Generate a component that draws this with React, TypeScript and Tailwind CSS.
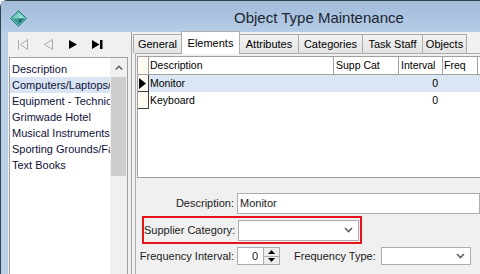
import React from 'react'

const listItems = [
  'Computers/Laptops/Printers',
  'Equipment - Technical',
  'Grimwade Hotel',
  'Musical Instruments',
  'Sporting Grounds/Facilities',
  'Text Books',
]

const tabs = [
  { label: 'General', w: 'w-[49px]' },
  { label: 'Elements', w: 'w-[59px]' },
  { label: 'Attributes', w: 'w-[60px]' },
  { label: 'Categories', w: 'w-[65px]' },
  { label: 'Task Staff', w: 'w-[61px]' },
  { label: 'Objects', w: 'w-[45px]' },
]

const rows = [
  { desc: 'Monitor', interval: '0', current: true },
  { desc: 'Keyboard', interval: '0', current: false },
]

function AppIcon() {
  return (
    <svg width="17" height="17" viewBox="0 0 17 17">
      <polygon points="8.5,0.5 16.5,8.5 8.5,16.5 0.5,8.5" fill="#5cbcb5" stroke="#2f7f7b" strokeWidth="1" />
      <polygon points="8.5,2.5 14.5,8.5 8.5,8.5" fill="#9fe0d8" />
      <polygon points="2.5,8.5 8.5,2.5 8.5,8.5" fill="#7dcfc6" />
      <polygon points="8.5,8.5 14.5,8.5 8.5,14.5" fill="#1f6c67" />
      <polygon points="2.5,8.5 8.5,8.5 8.5,14.5" fill="#3c9690" />
    </svg>
  )
}

function NavButtons() {
  return (
    <div className="flex h-[25px] items-center pl-[2px]">
      <div className="flex h-[22px] w-[25px] items-center justify-center">
        <svg width="12" height="11" viewBox="0 0 12 11">
          <path d="M1.5 0.5 V10.5" stroke="#a8a8a8" strokeWidth="1" />
          <path d="M10.5 0.5 L3.5 5.5 L10.5 10.5 Z" fill="none" stroke="#a8a8a8" strokeWidth="1" />
        </svg>
      </div>
      <div className="flex h-[22px] w-[25px] items-center justify-center">
        <svg width="11" height="11" viewBox="0 0 11 11">
          <path d="M10.5 0.5 L2.5 5.5 L10.5 10.5 Z" fill="none" stroke="#a8a8a8" strokeWidth="1" />
        </svg>
      </div>
      <div className="flex h-[22px] w-[25px] items-center justify-center">
        <svg width="9" height="9" viewBox="0 0 9 9">
          <path d="M1 0 L9 4.5 L1 9 Z" fill="#000" />
        </svg>
      </div>
      <div className="flex h-[22px] w-[25px] items-center justify-center">
        <svg width="11" height="9" viewBox="0 0 11 9">
          <path d="M0 0 L7.5 4.5 L0 9 Z" fill="#000" />
          <rect x="8" y="0" width="2.5" height="9" fill="#000" />
        </svg>
      </div>
    </div>
  )
}

function ObjectList() {
  return (
    <div className="ml-[1px] flex flex-1 border-l border-t border-r border-[#a0a0a0] bg-white">
      <div className="w-[100px] overflow-hidden pt-[1px] text-[11px] text-[#10103a]">
        <div className="flex h-[18px] items-center whitespace-nowrap pl-[2px] pt-[2px]">Description</div>
        {listItems.map((item, i) => (
          <div
            key={item}
            className={
              i === 0
                ? 'flex h-[16px] items-center whitespace-nowrap bg-[#d9e5f3] pl-[2px]'
                : 'flex h-[16px] items-center whitespace-nowrap pl-[2px]'
            }
          >
            {item}
          </div>
        ))}
      </div>
      <div className="flex w-[17px] flex-col bg-[#f0f0f0]">
        <div className="flex h-[19px] items-center justify-center">
          <svg width="8" height="5" viewBox="0 0 8 5">
            <path d="M0.8 4.5 L4 1.3 L7.2 4.5" fill="none" stroke="#606060" strokeWidth="1.5" />
          </svg>
        </div>
        <div className="mx-[1px] h-[99px] bg-[#cdcdcd]" />
      </div>
    </div>
  )
}

function Chevron() {
  return (
    <svg width="9" height="6" viewBox="0 0 9 6">
      <path d="M1 1 L4.5 4.5 L8 1" fill="none" stroke="#606060" strokeWidth="1.6" />
    </svg>
  )
}

function ElementsGrid() {
  return (
    <div className="ml-[1px] h-[122px] border-l border-t border-b border-[#a0a0a0] bg-white text-[10.5px] text-[#000]">
      <div className="flex h-[18px] border-b border-[#a0a0a0]">
        <div className="w-[11px] border-r border-[#a0a0a0] bg-[#fdfaf2]" />
        <div className="flex w-[185px] items-center border-r border-[#a0a0a0] pl-[1px]">Description</div>
        <div className="flex w-[65px] items-center border-r border-[#a0a0a0] pl-[2px]">Supp Cat</div>
        <div className="flex w-[44px] items-center border-r border-[#a0a0a0] pl-[2px]">Interval</div>
        <div className="flex w-[35px] items-center border-r border-[#a0a0a0] pl-[1px]">Freq</div>
      </div>
      {rows.map((r) => (
        <div key={r.desc} className="flex h-[17px]">
          <div className="flex w-[11px] items-center border-r border-b border-[#404040] bg-[#fdfaf2] pl-[1px]">
            {r.current && (
              <svg width="7" height="11" viewBox="0 0 7 11">
                <path d="M0 0 L7 5.5 L0 11 Z" fill="#000" />
              </svg>
            )}
          </div>
          <div className={r.current ? 'flex flex-1 bg-[#dae6f4]' : 'flex flex-1'}>
            <div className="flex w-[185px] items-center pl-[1px]">{r.desc}</div>
            <div className="w-[65px]" />
            <div className="flex w-[44px] items-center justify-end pr-[5px]">{r.interval}</div>
          </div>
        </div>
      ))}
    </div>
  )
}

function Form() {
  return (
    <div className="flex flex-col text-[11px] text-[#1a1a1a]">
      <div className="mt-[15px] flex h-[21px] items-center">
        <div className="w-[99px] pr-[1px] text-right">Description:</div>
        <div className="ml-[2px] flex h-[21px] flex-1 items-center border border-[#abadb3] bg-white pl-[2px]">Monitor</div>
      </div>
      <div className="mt-[2px] ml-[6px] flex h-[28px] w-[220px] items-center border-2 border-[#e8141a]">
        <div className="w-[92px] whitespace-nowrap pr-[1px] text-right">Supplier Category:</div>
        <div className="ml-[2px] flex h-[21px] w-[121px] items-center justify-end border border-[#abadb3] bg-white pr-[5px]">
          <Chevron />
        </div>
      </div>
      <div className="mt-[3px] flex h-[18px] items-center">
        <div className="w-[99px] whitespace-nowrap pr-[1px] text-right">Frequency Interval:</div>
        <div className="ml-[2px] flex h-[18px] w-[27px] items-center justify-end border border-[#abadb3] bg-white pr-[5px]">0</div>
        <div className="flex h-[18px] w-[16px] flex-col border border-l-0 border-[#acacac] bg-[#ececec]">
          <div className="flex flex-1 items-center justify-center border-b border-[#acacac]">
            <svg width="7" height="4" viewBox="0 0 7 4">
              <path d="M0 4 L3.5 0 L7 4 Z" fill="#000" />
            </svg>
          </div>
          <div className="flex flex-1 items-center justify-center">
            <svg width="7" height="4" viewBox="0 0 7 4">
              <path d="M0 0 L3.5 4 L7 0 Z" fill="#000" />
            </svg>
          </div>
        </div>
        <div className="ml-[14px] w-[87px] whitespace-nowrap">Frequency Type:</div>
        <div className="flex h-[18px] w-[90px] items-center justify-end border border-[#abadb3] bg-white pr-[5px]">
          <Chevron />
        </div>
      </div>
    </div>
  )
}

export default function App() {
  return (
    <div className="h-[274px] w-[480px] overflow-hidden bg-white font-['Liberation_Sans',Arial,sans-serif]">
      <div className="flex h-[290px] flex-col rounded-tl-[7px] border-l border-t border-[#33404d] bg-[#b8cfe8]">
        <div className="flex h-[31px] items-center bg-gradient-to-b from-[#a2bcda] to-[#b5cce6] pt-[4px]">
          <div className="ml-[9px]">
            <AppIcon />
          </div>
          <div className="ml-[207px] text-[15px] text-[#1c2530]">Object Type Maintenance</div>
        </div>
        <div className="ml-[7px] flex flex-1 bg-[#f0f0f0]">
          <div className="flex w-[120px] flex-col">
            <NavButtons />
            <ObjectList />
          </div>
          <div className="ml-[3px] w-[2px] border-l border-[#a0a0a0]" />
          <div className="flex flex-1 flex-col">
            <div className="flex h-[21px] items-end">
              {tabs.map((t, i) =>
                t.label === 'Elements' ? (
                  <div
                    key={t.label}
                    className={`relative z-10 -ml-px mb-[-1px] flex h-[23px] items-start justify-center border border-b-0 border-[#acacac] bg-white pt-[3px] text-[11px] text-[#000] ${t.w}`}
                  >
                    {t.label}
                  </div>
                ) : (
                  <div
                    key={t.label}
                    className={`flex h-[19px] items-center justify-center border border-b-0 border-[#acacac] bg-gradient-to-b from-[#f3f3f3] to-[#e4e4e4] text-[11px] text-[#000] ${i === 0 ? '' : '-ml-px'} ${t.w}`}
                  >
                    {t.label}
                  </div>
                ),
              )}
            </div>
            <div className="ml-[2px] flex-1 border-l border-t border-[#acacac] bg-[#f0f0f0] pt-[2px]">
              <ElementsGrid />
              <Form />
            </div>
          </div>
        </div>
      </div>
    </div>
  )
}
